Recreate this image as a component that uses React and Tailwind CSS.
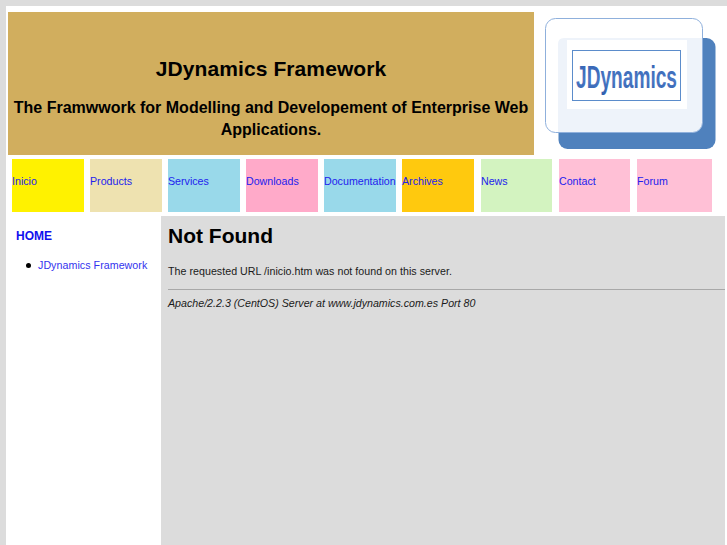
const NAV_ITEMS = [
  { label: "Inicio", className: "bg-[#fff200] w-[72px]" },
  { label: "Products", className: "bg-[#eee2b0] w-[72px]" },
  { label: "Services", className: "bg-[#99d9ea] w-[72px]" },
  { label: "Downloads", className: "bg-[#ffaac9] w-[72px]" },
  { label: "Documentation", className: "bg-[#99d9ea] w-[72px]" },
  { label: "Archives", className: "bg-[#ffc90e] w-[72px]" },
  { label: "News", className: "bg-[#d3f3c0] w-[71px] ml-[1px]" },
  { label: "Contact", className: "bg-[#ffc0d6] w-[71px] ml-[1px]" },
  { label: "Forum", className: "bg-[#ffc0d6] w-[75px] ml-[1px]" },
];

function Logo() {
  return (
    <svg width="172" height="134" viewBox="0 0 172 134" className="block">
      <defs>
        <linearGradient id="logoText" x1="0" y1="0" x2="0" y2="1">
          <stop offset="0" stopColor="#2f5fb0" />
          <stop offset="0.6" stopColor="#4a78c4" />
          <stop offset="1" stopColor="#2f5fae" />
        </linearGradient>
      </defs>
      <rect x="13.5" y="20" width="157" height="111" rx="9" fill="#4f81bd" />
      <rect x="0.5" y="0.5" width="157" height="114" rx="10" fill="#ffffff" />
      <path d="M13 114 L13 26 Q13 20 19 20 L157 20 L157 105 Q157 114 148 114 Z" fill="#eef3fa" />
      <rect x="0.5" y="0.5" width="157" height="114" rx="10" fill="none" stroke="#8fb0dc" />
      <rect x="22" y="22" width="120" height="69" fill="#ffffff" />
      <rect x="27.5" y="32.5" width="108" height="50" fill="#ffffff" stroke="#5b8ccb" />
      <text
        transform="translate(31 70) scale(1 1.33)"
        fontFamily="'Liberation Sans', Arial, sans-serif"
        fontWeight="700"
        fontSize="24"
        textLength="101"
        lengthAdjust="spacingAndGlyphs"
        fill="url(#logoText)"
      >
        JDynamics
      </text>
    </svg>
  );
}

export default function App() {
  return (
    <div className="h-[545px] overflow-hidden bg-[#dcdcdc] pt-[6px] pl-[6px] font-['Liberation_Sans',Arial,sans-serif]">
      <div className="h-full bg-white">
        {/* Header */}
        <div className="flex pl-[2px] pt-[6px]">
          <div className="w-[526px] h-[143px] shrink-0 bg-[#d1ae5e] flex flex-col items-center pt-[45px] text-black font-bold text-center">
            <h1 className="text-[21px] leading-[24px] tracking-[0.1px]">JDynamics Framework</h1>
            <p className="text-[16px] leading-[22px] mt-[16px]">
              The Framwwork for Modelling and Developement of Enterprise Web
              <br />
              Applications.
            </p>
          </div>
          <div className="ml-[11px] mt-[6px]">
            <Logo />
          </div>
        </div>

        {/* Menu */}
        <div className="flex gap-[6px] pl-[6px] mt-[4px]">
          {NAV_ITEMS.map((item) => (
            <a
              key={item.label}
              className={`${item.className} h-[53px] pb-[10px] flex items-center text-[10.67px] text-[#2222ee] whitespace-nowrap`}
            >
              {item.label}
            </a>
          ))}
        </div>

        <div className="flex mt-[4px] h-[400px]">
          {/* Side menu */}
          <div className="w-[155px] pl-[10px] pt-[13px]">
            <h3 className="text-[12px] leading-[14px] font-bold text-[#1010ee]">HOME</h3>
            <ul className="mt-[15px]">
              <li className="flex items-center pl-[10px] text-[10.67px] leading-[14px] text-[#3333ee] tracking-[0.05px]">
                <span className="w-[5px] h-[5px] rounded-full bg-black mr-[7px]"></span>
                JDynamics Framework
              </li>
            </ul>
          </div>

          {/* Main */}
          <div className="w-[564px] bg-[#dcdcdc] pl-[7px] pt-[7px] text-black">
            <h1 className="text-[21px] leading-[26px] font-bold">Not Found</h1>
            <p className="text-[10.67px] leading-[14px] mt-[15px] tracking-[0.03px] text-[#1a1a1a]">
              The requested URL /inicio.htm was not found on this server.
            </p>
            <hr className="border-t border-[#a8a8a8] mt-[11px]" />
            <address className="text-[10.67px] leading-[14px] italic mt-[6px] text-[#1a1a1a]">
              Apache/2.2.3 (CentOS) Server at www.jdynamics.com.es Port 80
            </address>
          </div>
        </div>
      </div>
    </div>
  );
}
